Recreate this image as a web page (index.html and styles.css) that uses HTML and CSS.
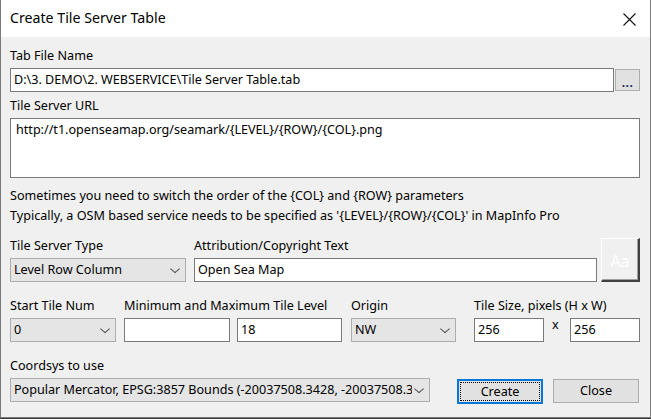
FILE: index.html
```html
<!DOCTYPE html>
<html>
<head>
<meta charset="utf-8">
<link rel="stylesheet" href="styles.css">
</head>
<body>
<div class="window">
  <div class="titlebar">
    <span class="title">Create Tile Server Table</span>
    <svg class="close-x" width="13" height="13" viewBox="0 0 13 13"><path d="M0.5 0.5 L12.5 12.5 M12.5 0.5 L0.5 12.5" stroke="#111" stroke-width="1.1" fill="none"/></svg>
  </div>
  <div class="content">
    <div class="label">Tab File Name</div>
    <div class="file-row">
      <div class="input file-input">D:\3. DEMO\2. WEBSERVICE\Tile Server Table.tab</div>
      <div class="browse"><span>...</span></div>
    </div>
    <div class="label gap6">Tile Server URL</div>
    <div class="textarea">http://t1.openseamap.org/seamark/{LEVEL}/{ROW}/{COL}.png</div>
    <div class="info">
      <div>Sometimes you need to switch the order of the {COL} and {ROW} parameters</div>
      <div>Typically, a OSM based service needs to be specified as '{LEVEL}/{ROW}/{COL}' in MapInfo Pro</div>
    </div>
    <div class="row3">
      <div class="field w176">
        <div class="label">Tile Server Type</div>
        <div class="combo">Level Row Column<span class="chev"></span></div>
      </div>
      <div class="field attr">
        <div class="label">Attribution/Copyright Text</div>
        <div class="input">Open Sea Map</div>
      </div>
      <div class="aa">Aa</div>
    </div>
    <div class="row4">
      <div class="field w106">
        <div class="label">Start Tile Num</div>
        <div class="combo">0<span class="chev"></span></div>
      </div>
      <div class="field levels">
        <div class="label">Minimum and Maximum Tile Level</div>
        <div class="pair">
          <div class="input w106"></div>
          <div class="input w105">18</div>
        </div>
      </div>
      <div class="field origin">
        <div class="label">Origin</div>
        <div class="combo">NW<span class="chev"></span></div>
      </div>
      <div class="field tilesize">
        <div class="label">Tile Size, pixels (H x W)</div>
        <div class="pair">
          <div class="input w70">256</div>
          <span class="times">x</span>
          <div class="input w70">256</div>
        </div>
      </div>
    </div>
    <div class="row5">
      <div class="field coords">
        <div class="label">Coordsys to use</div>
        <div class="combo"><span class="clip">Popular Mercator, EPSG:3857 Bounds (-20037508.3428, -20037508.3</span><span class="chev"></span></div>
      </div>
      <div class="btn create"><span class="focus">Create</span></div>
      <div class="btn close">Close</div>
    </div>
  </div>
</div>
</body>
</html>
```
FILE: styles.css
```css
* { box-sizing: border-box; }
html, body { margin: 0; padding: 0; }
body {
  width: 651px;
  height: 419px;
  background: #3a3a3a;
  font-family: "Noto Sans", "Open Sans", sans-serif;
  font-size: 12.6px;
  color: #000;
  overflow: hidden;
}
.window {
  width: 651px;
  height: 418px;
  background: #f0f0f0;
  border-left: 1px solid #7a7a7a;
  border-right: 1px solid #7a7a7a;
  border-bottom: 1px solid #7a7a7a;
  display: flex;
  flex-direction: column;
}
.titlebar {
  height: 37px;
  background: #fff;
  display: flex;
  align-items: center;
  justify-content: space-between;
  padding: 0 14px 0 9px;
}
.title {
  font-size: 14.2px;
  line-height: 20px;
  margin-top: -1px;
}
.close-x { margin-top: 1px; }
.content {
  padding: 11px 10px 0 9px;
  display: flex;
  flex-direction: column;
}
.label {
  line-height: 16px;
  height: 16px;
  margin-bottom: 4px;
  white-space: nowrap;
}
.gap6 { margin-top: 6px; }
.input {
  height: 24px;
  background: #fff;
  border: 1px solid #7a7a7a;
  line-height: 22px;
  padding-left: 3px;
  white-space: nowrap;
  overflow: hidden;
}
.file-row {
  display: flex;
  align-items: flex-start;
}
.file-input { width: 604px; }
.browse {
  width: 25px;
  height: 22px;
  margin: 1px 0 0 1px;
  background: #e1e1e1;
  border: 1px solid #adadad;
  display: flex;
  justify-content: center;
  align-items: flex-end;
  font-weight: bold;
  color: #1a2a5a;
  line-height: 14px;
  font-size: 12px;
  letter-spacing: 0.5px;
}
.textarea {
  height: 60px;
  width: 630px;
  background: #fff;
  border: 1px solid #7a7a7a;
  padding: 3px 5px;
  line-height: 16px;
}
.info {
  margin-top: 8px;
  line-height: 20px;
  white-space: nowrap;
}
.row3 {
  margin-top: 12px;
  display: flex;
  align-items: flex-end;
}
.field { display: flex; flex-direction: column; }
.w176 { width: 176px; }
.attr { width: 403px; margin-left: 8px; }
.aa {
  width: 39px;
  height: 44px;
  margin-left: 4px;
  background: #f0f0f0;
  border-top: 1px solid #fff;
  border-left: 1px solid #fff;
  border-right: 2px solid #404040;
  border-bottom: 2px solid #404040;
  box-shadow: inset -1px -1px 0 #a0a0a0;
  color: #fff;
  font-size: 16px;
  display: flex;
  align-items: center;
  justify-content: center;
  padding-top: 2px;
}
.combo {
  position: relative;
  height: 24px;
  background: #e5e5e5;
  border: 1px solid #adadad;
  line-height: 22px;
  padding-left: 3px;
  white-space: nowrap;
}
.chev {
  position: absolute;
  right: 7px;
  top: 7px;
  width: 6px;
  height: 6px;
  border-right: 1px solid #606060;
  border-bottom: 1px solid #606060;
  transform: scaleX(1.2) rotate(45deg);
}
.row4 {
  margin-top: 16px;
  display: flex;
}
.w106 { width: 106px; }
.w105 { width: 105px; }
.w70 { width: 70px; }
.levels { margin-left: 8px; }
.pair { display: flex; align-items: flex-start; }
.levels .pair .w105 { margin-left: 7px; }
.origin { width: 105px; margin-left: 9px; }
.tilesize { margin-left: 18px; }
.times {
  width: 26px;
  padding-left: 8px;
  line-height: 14px;
}
.row5 {
  margin-top: 16px;
  display: flex;
  align-items: flex-end;
}
.coords { width: 420px; }
.clip {
  display: block;
  width: 398px;
  overflow: hidden;
  white-space: nowrap;
}
.btn {
  height: 25px;
  background: #e1e1e1;
  border: 1px solid #adadad;
  display: flex;
  align-items: center;
  justify-content: center;
  line-height: 16px;
}
.create {
  width: 86px;
  margin-left: 27px;
  margin-bottom: -2px;
  border: 2px solid #0078d7;
  padding: 1px;
}
.create .focus {
  width: 100%;
  height: 100%;
  border: 1px dotted #000;
  display: flex;
  align-items: center;
  justify-content: center;
}
.close {
  width: 86px;
  height: 24px;
  margin-left: 10px;
  margin-bottom: -1px;
}
```
